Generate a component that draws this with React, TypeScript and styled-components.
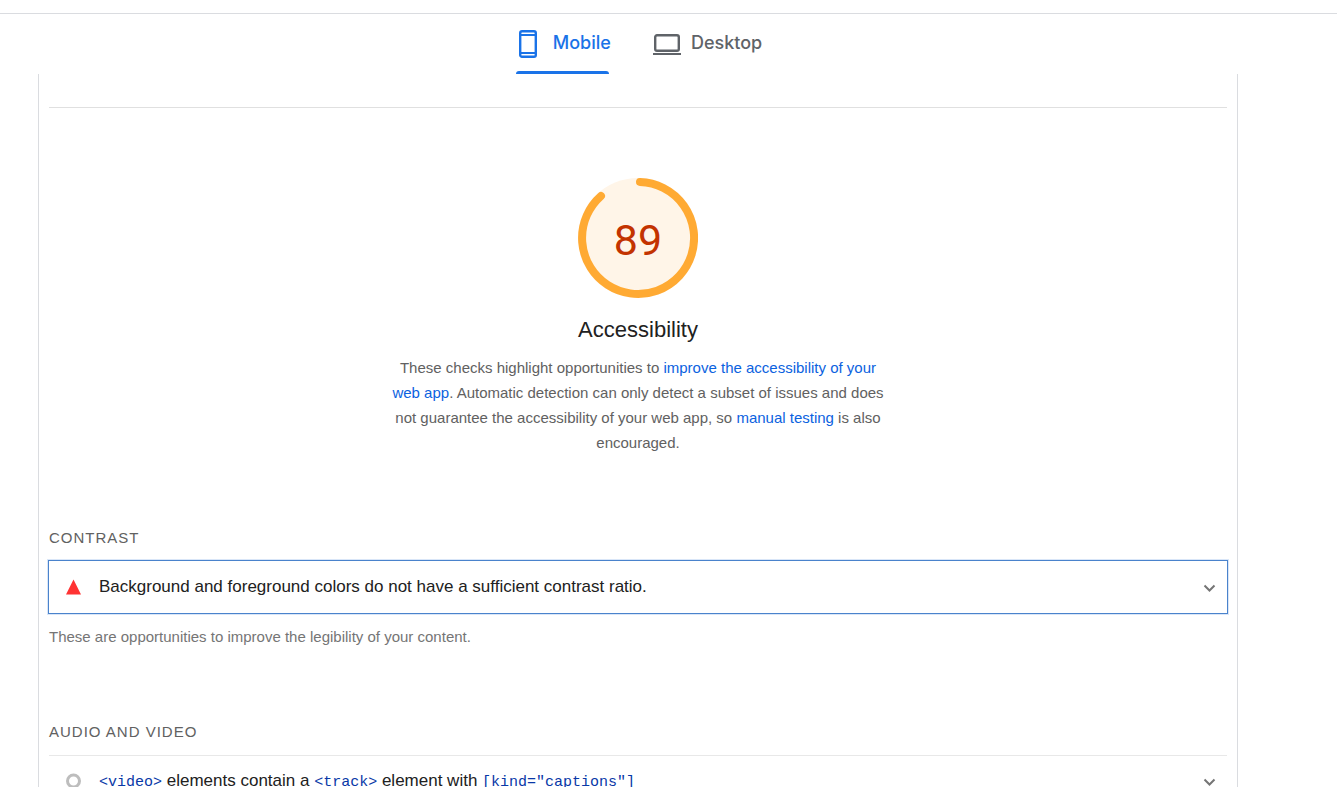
import React from "react";
import styled, { createGlobalStyle } from "styled-components";

const GlobalStyle = createGlobalStyle`
  * { box-sizing: border-box; }
  body {
    margin: 0;
    overflow: hidden;
    background: #fff;
    color: #212121;
    font-family: "Liberation Sans", Arial, sans-serif;
  }
`;

const Page = styled.div`
  height: 100vh;
  overflow: hidden;
  padding-top: 13px;
`;

const TabBar = styled.nav`
  display: flex;
  justify-content: center;
  gap: 42px;
  height: 61px;
  padding-right: 60px;
  border-top: 1px solid #dadce0;
`;

const Tab = styled.button<{ $active?: boolean }>`
  position: relative;
  display: flex;
  align-items: center;
  gap: 10px;
  height: 60px;
  padding: 0;
  border: 0;
  background: none;
  color: ${(p) => (p.$active ? "#1a73e8" : "#5f6368")};
  font: 500 18px/24px Inter, Roboto, sans-serif;

  &::after {
    content: "";
    position: absolute;
    inset: auto 2px 0 1px;
    height: 3px;
    border-radius: 3px 3px 0 0;
    background: ${(p) => (p.$active ? "#1a73e8" : "transparent")};
  }
`;

const TabLabel = styled.span`
  padding-bottom: 2px;
`;

const Report = styled.main`
  margin: 0 99px 0 38px;
  padding: 33px 10px 0;
  border: solid #dadce0;
  border-width: 0 1px;
`;

const Summary = styled.section`
  display: flex;
  flex-direction: column;
  align-items: center;
  padding-top: 70px;
  border-top: 1px solid #e0e0e0;
`;

const Gauge = styled.div`
  display: grid;
  place-items: center;
  width: 120px;
  height: 120px;

  > * { grid-area: 1 / 1; }
`;

const Score = styled.span`
  padding-top: 4px;
  color: #c33300;
  font: 43px/48px Roboto, sans-serif;
`;

const Title = styled.h1`
  margin: 16px 0 9px;
  font-size: 22px;
  font-weight: 400;
  line-height: 32px;
`;

const Description = styled.p`
  width: 500px;
  max-width: 100%;
  margin: 0;
  color: #616161;
  font-size: 15px;
  line-height: 25px;
  text-align: center;
`;

const Link = styled.a`
  color: #0b62e0;
  text-decoration: none;
`;

const Group = styled.section`
  padding-top: 70px;
`;

const GroupTitle = styled.h2`
  margin: 0 0 11px;
  color: #616161;
  font-size: 15px;
  font-weight: 400;
  line-height: 25px;
  letter-spacing: 1px;
  text-transform: uppercase;
`;

const Audit = styled.button<{ $focused?: boolean }>`
  display: flex;
  align-items: center;
  width: 100%;
  height: 52px;
  padding: 0 11px 2px 17px;
  border: 0;
  border-top: 1px solid ${(p) => (p.$focused ? "transparent" : "#e8e8e8")};
  background: none;
  color: #212121;
  font: 17px/26px "Liberation Sans", Arial, sans-serif;
  text-align: left;
  outline: ${(p) => (p.$focused ? "1px solid #4a83cc" : "none")};
  box-shadow: ${(p) => (p.$focused ? "0 0 0 2px #d9e6f8" : "none")};
`;

const AuditTitle = styled.span`
  flex: 1;
  margin-left: 17px;
`;

const Code = styled.code`
  color: #0938a7;
  font: 15px/20px "Liberation Mono", monospace;
`;

const GroupNote = styled.p`
  margin: 12px 0 0;
  color: #757575;
  font-size: 15px;
  line-height: 24px;
`;

const Chevron = () => (
  <svg width="13" height="13" viewBox="0 0 13 13" fill="none" stroke="#757575" strokeWidth="2" aria-hidden="true">
    <path d="M1.5 5.5l5 5 5-5" />
  </svg>
);

export default function App() {
  return (
    <Page>
      <GlobalStyle />
      <TabBar aria-label="Device">
        <Tab $active>
          <svg width="28" height="28" viewBox="0 0 28 28" fill="none" stroke="currentColor" aria-hidden="true">
            <rect x="5.2" y="1.2" width="15.6" height="25.6" rx="1.8" strokeWidth="2.4" />
            <path d="M5 5h16M5 23h16" strokeWidth="2" />
          </svg>
          <TabLabel>Mobile</TabLabel>
        </Tab>
        <Tab>
          <svg width="28" height="28" viewBox="0 0 28 28" fill="none" stroke="currentColor" aria-hidden="true">
            <rect x="2.2" y="5.2" width="23.6" height="15.6" rx="1.8" strokeWidth="2.4" />
            <path d="M0 24h28" strokeWidth="2" />
          </svg>
          <TabLabel>Desktop</TabLabel>
        </Tab>
      </TabBar>
      <Report>
        <Summary>
          <Gauge>
            <svg width="120" height="120" viewBox="0 0 120 120" aria-hidden="true">
              <circle cx="60" cy="60" r="60" fill="#fff5e8" />
              <path
                d="M62 4A56 56 0 1 1 23 18"
                fill="none"
                stroke="#fa3"
                strokeWidth="8"
                strokeLinecap="round"
              />
            </svg>
            <Score>89</Score>
          </Gauge>
          <Title>Accessibility</Title>
          <Description>
            These checks highlight opportunities to{" "}
            <Link href="#improve">improve the accessibility of your web app</Link>. Automatic detection can only
            detect a subset of issues and does not guarantee the accessibility of your web app, so{" "}
            <Link href="#manual">manual testing</Link> is also encouraged.
          </Description>
        </Summary>
        <Group>
          <GroupTitle>Contrast</GroupTitle>
          <Audit $focused>
            <svg width="16" height="16" viewBox="0 0 16 16" aria-hidden="true">
              <path d="M7.5 0.5l7.5 15H0z" fill="#f33" />
            </svg>
            <AuditTitle>Background and foreground colors do not have a sufficient contrast ratio.</AuditTitle>
            <Chevron />
          </Audit>
          <GroupNote>These are opportunities to improve the legibility of your content.</GroupNote>
        </Group>
        <Group>
          <GroupTitle>Audio and video</GroupTitle>
          <Audit>
            <svg width="16" height="16" viewBox="0 0 16 16" aria-hidden="true">
              <circle cx="7.5" cy="8" r="6" fill="none" stroke="#bdbdbd" strokeWidth="3" />
            </svg>
            <AuditTitle>
              <Code>&lt;video&gt;</Code> elements contain a <Code>&lt;track&gt;</Code> element with{" "}
              <Code>[kind="captions"]</Code>
            </AuditTitle>
            <Chevron />
          </Audit>
        </Group>
      </Report>
    </Page>
  );
}
